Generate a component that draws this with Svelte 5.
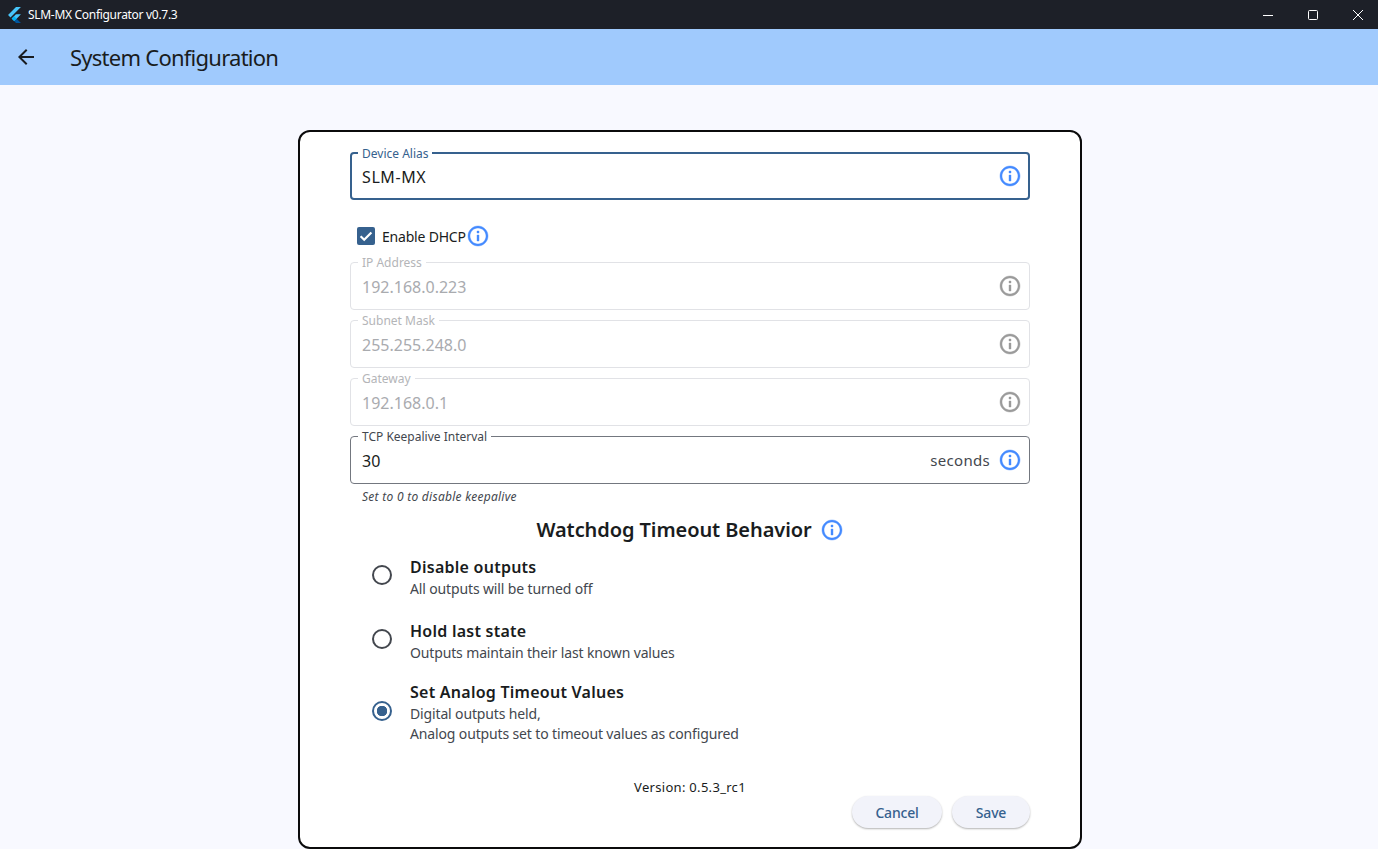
<script lang="ts">
  const disabledFields = [
    { label: 'IP Address', value: '192.168.0.223' },
    { label: 'Subnet Mask', value: '255.255.248.0' },
    { label: 'Gateway', value: '192.168.0.1' },
  ];

  const options = [
    { title: 'Disable outputs', lines: ['All outputs will be turned off'] },
    { title: 'Hold last state', lines: ['Outputs maintain their last known values'] },
    { title: 'Set Analog Timeout Values', lines: ['Digital outputs held,', 'Analog outputs set to timeout values as configured'] },
  ];

  let selected = $state(2);
  let dhcp = $state(true);
</script>

{#snippet info()}
  <svg class="info" viewBox="0 0 24 24" width="24" height="24" fill="currentColor" stroke="currentColor" stroke-width="0.4">
    <path d="M11 7h2v2h-2zm0 4h2v6h-2zm1-9C6.48 2 2 6.48 2 12s4.48 10 10 10 10-4.48 10-10S17.52 2 12 2zm0 18c-4.41 0-8-3.59-8-8s3.59-8 8-8 8 3.59 8 8-3.59 8-8 8z" />
  </svg>
{/snippet}

<div class="window">
  <div class="titlebar">
    <div class="title-left">
      <svg viewBox="0 0 256 317" width="13" height="16">
        <path fill="#47c5fb" d="M157.7 0L0 157.7l48.8 48.8L255.3 0zM156.6 145.4l-84.4 84.4 49 49.7 48.7-48.7 85.4-85.4z" />
        <path fill="#00569e" d="M121.1 279.5l37.1 37.1h97.1l-85.4-85.8z" />
        <path fill="#00b5f8" d="M71.6 230.4l48.8-48.8 49.4 49.2-48.7 48.7z" />
      </svg>
      <span>SLM-MX Configurator v0.7.3</span>
    </div>
    <div class="controls">
      <button class="ctl" aria-label="Minimize"><svg width="10" height="10" viewBox="0 0 10 10"><path d="M0 5.5h10" stroke="#fff" /></svg></button>
      <button class="ctl" aria-label="Maximize"><svg width="10" height="10" viewBox="0 0 10 10"><rect x=".5" y=".5" width="9" height="9" rx="1" fill="none" stroke="#fff" /></svg></button>
      <button class="ctl" aria-label="Close"><svg width="10" height="10" viewBox="0 0 10 10"><path d="M0 0l10 10M10 0L0 10" stroke="#fff" /></svg></button>
    </div>
  </div>

  <header class="appbar">
    <svg viewBox="0 0 24 24" width="24" height="24" fill="#191c20">
      <path d="M20 11H7.83l5.59-5.59L12 4l-8 8 8 8 1.41-1.41L7.83 13H20v-2z" />
    </svg>
    <h1>System Configuration</h1>
  </header>

  <main class="page">
    <section class="card">
      <div class="field focused">
        <span class="label">Device Alias</span>
        <span class="value">SLM-MX</span>
        <span class="blue">{@render info()}</span>
      </div>

      <div class="check-row">
        <button class="checkbox" aria-label="Enable DHCP" onclick={() => (dhcp = !dhcp)}>
          {#if dhcp}
            <svg viewBox="0 0 18 18" width="18" height="18"><path d="M3.6 9.2l3.6 3.6 7.2-7.4" fill="none" stroke="#fff" stroke-width="2.2" /></svg>
          {/if}
        </button>
        <span class="check-label">Enable DHCP</span>
        <span class="blue">{@render info()}</span>
      </div>

      <div class="stack">
        {#each disabledFields as f}
          <div class="field disabled">
            <span class="label">{f.label}</span>
            <span class="value">{f.value}</span>
            <span class="grey">{@render info()}</span>
          </div>
        {/each}
        <div class="field">
          <span class="label">TCP Keepalive Interval</span>
          <span class="value">30</span>
          <span class="suffix">seconds</span>
          <span class="blue">{@render info()}</span>
        </div>
      </div>
      <p class="helper">Set to 0 to disable keepalive</p>

      <div class="heading">
        <h2>Watchdog Timeout Behavior</h2>
        <span class="blue">{@render info()}</span>
      </div>

      <div class="options">
        {#each options as o, i}
          <button class="option" class:tall={o.lines.length > 1} onclick={() => (selected = i)}>
            <span class="radio" class:on={selected === i}></span>
            <span class="option-text">
              <strong>{o.title}</strong>
              {#each o.lines as line}
                <span>{line}</span>
              {/each}
            </span>
          </button>
        {/each}
      </div>

      <p class="version">Version: 0.5.3_rc1</p>

      <div class="actions">
        <button class="btn cancel">Cancel</button>
        <button class="btn save">Save</button>
      </div>
    </section>
  </main>
</div>

<style>
  :global(body) {
    margin: 0;
    overflow: hidden;
    background: #f8f9ff;
  }

  .window {
    display: flex;
    flex-direction: column;
    height: 849px;
    font-family: "Noto Sans", "Open Sans", sans-serif;
    color: #191c20;
  }

  button {
    font: inherit;
    color: inherit;
    border: 0;
    background: none;
    padding: 0;
    cursor: pointer;
  }

  .titlebar {
    height: 29px;
    flex: none;
    display: flex;
    justify-content: space-between;
    background: #1d2028;
    color: #fff;
    font-size: 12px;
    letter-spacing: -0.3px;
  }

  .title-left {
    display: flex;
    align-items: center;
    gap: 7px;
    padding-left: 8px;
  }

  .controls {
    display: flex;
  }

  .ctl {
    width: 45px;
    height: 29px;
    display: flex;
    align-items: center;
    justify-content: center;
    padding-left: 4px;
  }

  .appbar {
    height: 56px;
    flex: none;
    display: flex;
    align-items: center;
    gap: 32px;
    padding-left: 14px;
    background: #a0cafd;
  }

  h1 {
    margin: 0;
    font-size: 22px;
    font-weight: 400;
    line-height: 28px;
    letter-spacing: -0.75px;
    color: #191c20;
  }

  .page {
    flex: 1;
    display: flex;
    justify-content: center;
    padding: 45px 0 0 2px;
    box-sizing: border-box;
    min-height: 0;
  }

  .card {
    width: 784px;
    box-sizing: border-box;
    border: 2px solid #0b0b0c;
    border-radius: 12px;
    background: #fff;
    padding: 20px 50px 18px;
    display: flex;
    flex-direction: column;
  }

  .field {
    position: relative;
    height: 48px;
    box-sizing: border-box;
    border: 1px solid #73777f;
    border-radius: 4px;
    display: flex;
    align-items: center;
    gap: 8px;
    padding: 2px 7px 0 11px;
    font-size: 16px;
    flex: none;
  }

  .field.focused {
    border: 2px solid #36618e;
    padding: 2px 6px 0 10px;
  }

  .focused .value {
    letter-spacing: 0.6px;
  }

  .field.disabled {
    border-color: #e1e2e6;
    color: #a9abaf;
  }

  .field > .blue, .field > .grey {
    margin-top: -2px;
  }

  .label {
    position: absolute;
    left: 7px;
    top: -7px;
    padding: 0 4px;
    background: #fff;
    font-size: 12px;
    line-height: 14px;
    color: #43474e;
  }

  .focused .label {
    left: 6px;
    top: -7px;
    color: #36618e;
  }

  .disabled .label {
    color: #b4b5b8;
  }

  .value {
    flex: 1;
  }

  .suffix {
    font-size: 15px;
    color: #43474e;
    letter-spacing: 0.3px;
    margin-top: -2px;
  }

  .blue, .grey {
    display: flex;
    flex: none;
  }

  .blue { color: #448aff; }
  .grey { color: #9b9b9b; }

  .check-row {
    height: 50px;
    margin-top: 11px;
    padding-left: 7px;
    display: flex;
    align-items: center;
    flex: none;
    font-size: 14px;
  }

  .checkbox {
    width: 18px;
    height: 18px;
    border-radius: 2px;
    background: #36618e;
    display: flex;
  }

  .check-label {
    margin-left: 7px;
    letter-spacing: -0.2px;
  }

  .stack {
    margin-top: 1px;
    display: flex;
    flex-direction: column;
    gap: 10px;
    flex: none;
  }

  .helper {
    margin: 5px 0 0 12px;
    font-size: 12px;
    line-height: 16px;
    font-style: italic;
    letter-spacing: 0.27px;
    color: #43474e;
  }

  .heading {
    margin-top: 11px;
    height: 28px;
    display: flex;
    align-items: center;
    justify-content: center;
    gap: 8px;
    flex: none;
  }

  h2 {
    margin: 0;
    font-size: 20px;
    font-weight: 600;
    line-height: 28px;
    letter-spacing: -0.08px;
  }

  .options {
    margin-top: 11px;
    padding-left: 22px;
    display: flex;
    flex-direction: column;
    gap: 20px;
    flex: none;
  }

  .option {
    display: flex;
    align-items: flex-start;
    gap: 18px;
    text-align: left;
  }

  .option.tall {
    margin-top: -3px;
  }

  .radio {
    width: 20px;
    height: 20px;
    box-sizing: border-box;
    margin-top: 10px;
    border: 2px solid #43474e;
    border-radius: 50%;
    flex: none;
  }

  .tall .radio {
    margin-top: 21px;
  }

  .radio.on {
    border-color: #36618e;
    background: radial-gradient(circle, #36618e 0 5px, transparent 5.5px);
  }

  .option-text {
    display: flex;
    flex-direction: column;
    font-size: 14px;
    line-height: 20px;
    letter-spacing: -0.14px;
    color: #43474e;
  }

  .option-text strong {
    font-size: 16px;
    line-height: 24px;
    font-weight: 600;
    letter-spacing: 0.25px;
    color: #191c20;
  }

  .version {
    margin: 33px 0 0;
    text-align: center;
    font-size: 13px;
    line-height: 20px;
    letter-spacing: 0.3px;
    color: #191c20;
  }

  .actions {
    margin-top: -1px;
    display: flex;
    justify-content: flex-end;
    gap: 10px;
    flex: none;
  }

  .btn {
    height: 32px;
    border-radius: 16px;
    background: #f2f3fa;
    color: #36618e;
    font-size: 14px;
    font-weight: 500;
    letter-spacing: -0.2px;
    box-shadow: 0 1px 2px rgba(0, 0, 0, 0.3);
  }

  .cancel { width: 90px; }
  .save { width: 78px; }
</style>
